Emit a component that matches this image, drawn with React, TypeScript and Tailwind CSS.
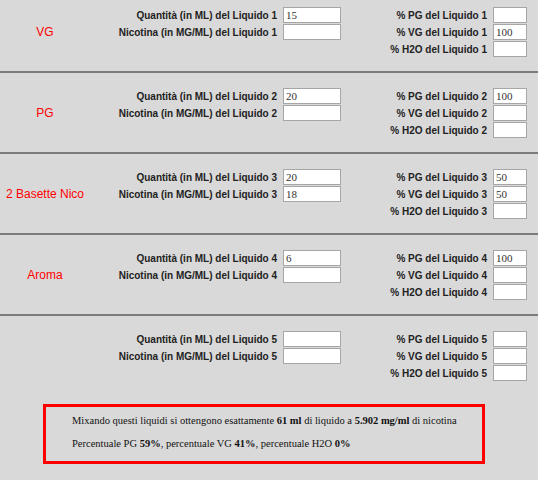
import React from 'react'

interface Liquid {
  id: number
  name: string
  qty: string
  nic: string
  pg: string
  vg: string
  h2o: string
}

const liquids: Liquid[] = [
  { id: 1, name: 'VG', qty: '15', nic: '', pg: '', vg: '100', h2o: '' },
  { id: 2, name: 'PG', qty: '20', nic: '', pg: '100', vg: '', h2o: '' },
  { id: 3, name: '2 Basette Nico', qty: '20', nic: '18', pg: '50', vg: '50', h2o: '' },
  { id: 4, name: 'Aroma', qty: '6', nic: '', pg: '100', vg: '', h2o: '' },
  { id: 5, name: '', qty: '', nic: '', pg: '', vg: '', h2o: '' },
]

const Field = ({ value, wide }: { value: string; wide?: boolean }) => (
  <input
    readOnly
    value={value}
    className={`${wide ? 'w-[58px]' : 'w-[34px]'} h-[16px] bg-white border border-[#a6a6a6] px-[2px] text-[11px] font-normal text-[#333] outline-none font-['Liberation_Serif',serif]`}
  />
)

const Row = ({ label, children, w }: { label: string; children: React.ReactNode; w: string }) => (
  <div className="flex items-center h-[16px]">
    <span className={`${w} text-right pr-[6px] whitespace-nowrap`}>{label}</span>
    {children}
  </div>
)

export default function App() {
  return (
    <div className="min-h-screen w-[538px] bg-[#d9d9d9] font-['Liberation_Sans',Arial,sans-serif]">
      {liquids.map((l, i) => (
        <div
          key={l.id}
          className={`flex ${i === 0 ? 'pt-[7px]' : 'pt-[15px]'} ${
            i < liquids.length - 1 ? 'pb-[14px] border-b-2 border-[#7c7c7c]' : 'pb-[23px]'
          }`}
        >
          <div className="w-[90px] flex items-center justify-center text-[12px] text-[#ff0000] whitespace-nowrap">
            {l.name}
          </div>
          <div className="flex flex-col gap-[1px] text-[10px] font-bold text-[#222]">
            <Row w="w-[193px]" label={`Quantità (in ML) del Liquido ${l.id}`}>
              <Field value={l.qty} wide />
            </Row>
            <Row w="w-[193px]" label={`Nicotina (in MG/ML) del Liquido ${l.id}`}>
              <Field value={l.nic} wide />
            </Row>
          </div>
          <div className="flex flex-col gap-[1px] text-[10px] font-bold text-[#222]">
            <Row w="w-[152px]" label={`% PG del Liquido ${l.id}`}>
              <Field value={l.pg} />
            </Row>
            <Row w="w-[152px]" label={`% VG del Liquido ${l.id}`}>
              <Field value={l.vg} />
            </Row>
            <Row w="w-[152px]" label={`% H2O del Liquido ${l.id}`}>
              <Field value={l.h2o} />
            </Row>
          </div>
        </div>
      ))}
      <div className="ml-[43px] w-[442px] h-[60px] border-[3px] border-[#ff0000] pl-[26px] pt-[7px] flex flex-col gap-[10px] text-[10.5px] leading-[13px] text-[#111] font-['Liberation_Serif','Times_New_Roman',serif]">
        <p>
          Mixando questi liquidi si ottengono esattamente <b>61 ml</b> di liquido a <b>5.902 mg/ml</b> di nicotina
        </p>
        <p>
          Percentuale PG <b>59%</b>, percentuale VG <b>41%</b>, percentuale H2O <b>0%</b>
        </p>
      </div>
    </div>
  )
}
